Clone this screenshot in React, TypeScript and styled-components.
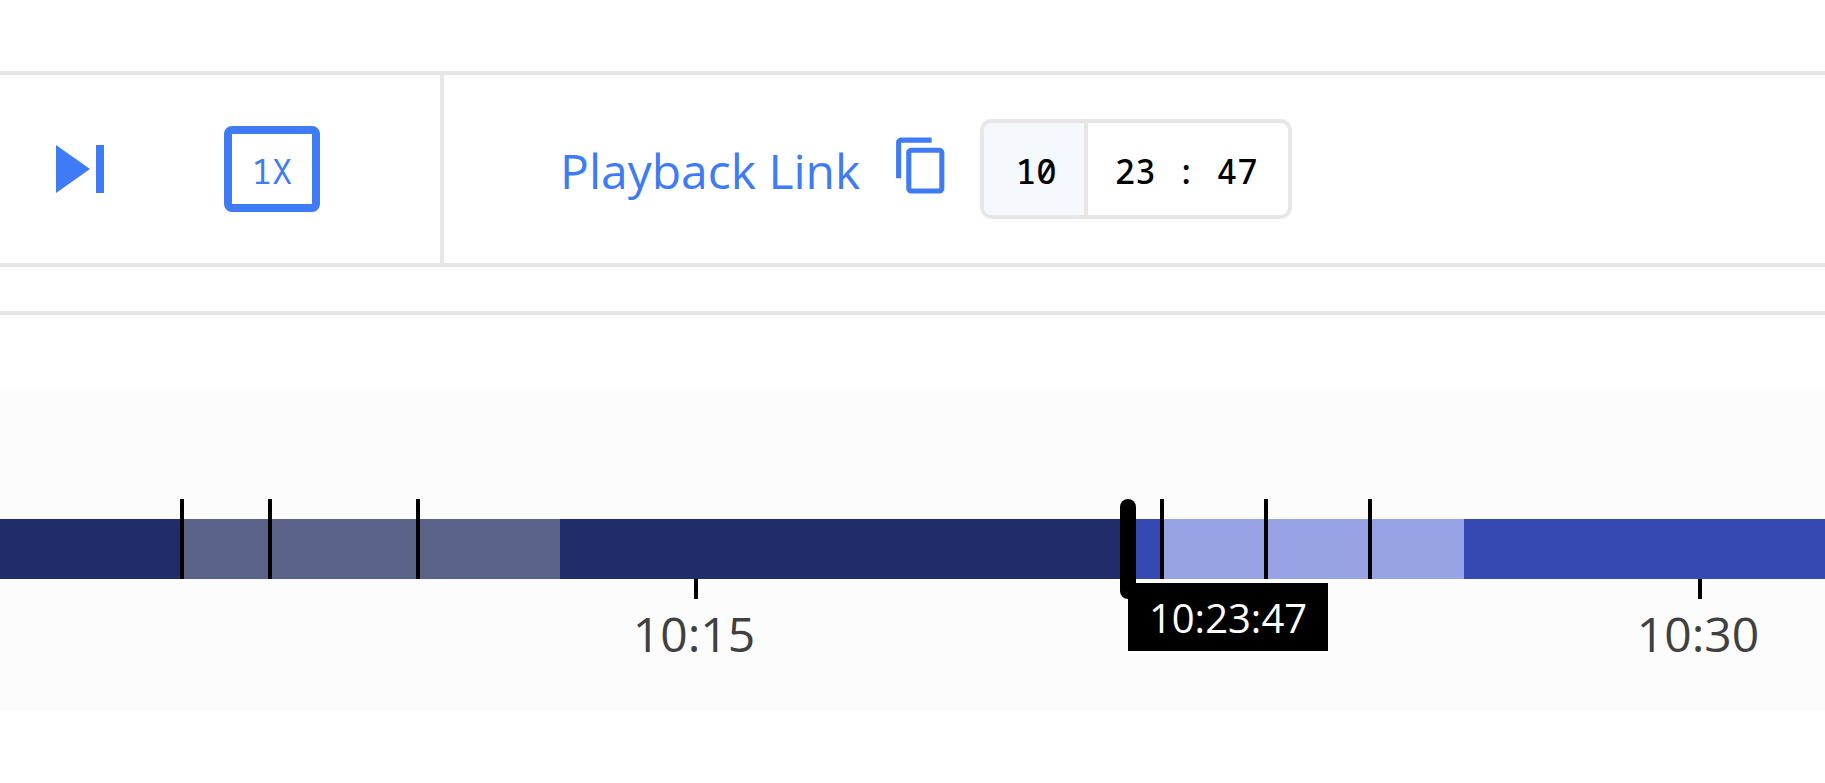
import React from "react";
import styled, { createGlobalStyle } from "styled-components";
import { MdContentCopy, MdSkipNext } from "react-icons/md";

const blue = "#3e7bf4";
const line = "#e6e6e6";
const sans = `"Open Sans", "Noto Sans", sans-serif`;
const mono = `"Noto Sans Mono", "DejaVu Sans Mono", monospace`;

const GlobalStyle = createGlobalStyle`
  *, *::before, *::after { box-sizing: border-box; }
  body { margin: 0; background: #fff; font-family: ${sans}; overflow-x: hidden; }
`;

const Page = styled.main`
  padding: 71px 0 72px;
`;

const Toolbar = styled.section`
  display: flex;
  height: 196px;
  border-top: 4px solid ${line};
  border-bottom: 4px solid ${line};
`;

const Controls = styled.div`
  display: flex;
  align-items: center;
  gap: 96px;
  padding: 0 120px 0 32px;
  border-right: 4px solid ${line};
`;

const IconButton = styled.button`
  display: flex;
  padding: 0;
  border: 0;
  background: none;
  color: ${blue};
`;

const SpeedButton = styled.button`
  width: 96px;
  height: 86px;
  padding: 4px 0 0;
  border: 8px solid ${blue};
  border-radius: 8px;
  background: #fff;
  color: ${blue};
  font: 34px/40px ${mono};
`;

const LinkGroup = styled.div`
  display: flex;
  align-items: center;
  padding-left: 116px;
`;

const PlaybackLink = styled.a`
  display: flex;
  align-items: center;
  gap: 31px;
  margin-right: 28px;
  color: ${blue};
  font-size: 48px;
  line-height: 68px;
  white-space: nowrap;
  text-decoration: none;

  span { padding-top: 4px; }
  svg { margin-bottom: 8px; }
`;

const TimeFields = styled.div`
  display: flex;
  width: 312px;
  height: 100px;
  border: 4px solid ${line};
  border-radius: 12px;
  overflow: hidden;
`;

const TimeInput = styled.input<{ $hour?: boolean }>`
  flex: ${(p) => (p.$hour ? "0 0 104px" : "1 1 0")};
  min-width: 0;
  padding: ${(p) => (p.$hour ? "4px 0 0 4px" : "4px 4px 0 0")};
  border: 0;
  border-right: ${(p) => (p.$hour ? `4px solid ${line}` : "0")};
  background: ${(p) => (p.$hour ? "#f5f9fd" : "#fff")};
  color: #000;
  font: 500 34px/40px ${mono};
  text-align: center;
`;

const TimelinePanel = styled.section`
  margin-top: 44px;
  padding-top: 76px;
  border-top: 4px solid ${line};
`;

const Timeline = styled.div`
  position: relative;
  height: 320px;
  padding-top: 128px;
  background: #fcfcfc;
  overflow: hidden;
`;

const Band = styled.div`
  display: flex;
  height: 60px;
`;

const tones = {
  played: "#212c6a",
  playedGap: "#5b6288",
  upcoming: "#3649b2",
  upcomingGap: "#98a3e6",
};

const Segment = styled.div<{ $tone: keyof typeof tones }>`
  flex: none;
  background: ${(p) => tones[p.$tone]};

  &:last-child { flex: 1; }
`;

const EventMark = styled.span`
  position: absolute;
  top: 108px;
  width: 4px;
  height: 80px;
  background: #000;
`;

const HourMark = styled.div`
  position: absolute;
  top: 188px;
  display: flex;
  flex-direction: column;
  align-items: center;
  width: 160px;
  margin-left: -80px;
  color: #404040;
  font-size: 48px;
  line-height: 70px;

  &::before {
    content: "";
    width: 4px;
    height: 20px;
    background: #000;
  }

  span { padding-right: 4px; }
`;

const Playhead = styled.div`
  position: absolute;
  top: 108px;
  width: 16px;
  height: 100px;
  margin-left: -8px;
  border-radius: 8px;
  background: #000;
`;

const PlayheadTime = styled.output`
  position: absolute;
  top: 192px;
  width: 200px;
  height: 68px;
  background: #000;
  color: #fff;
  font-size: 40px;
  line-height: 70px;
  text-align: center;
`;

const segments: { tone: keyof typeof tones; width: number }[] = [
  { tone: "played", width: 180 },
  { tone: "playedGap", width: 380 },
  { tone: "played", width: 568 },
  { tone: "upcoming", width: 32 },
  { tone: "upcomingGap", width: 304 },
  { tone: "upcoming", width: 361 },
];
const events = [180, 268, 416, 1160, 1264, 1368];
const hours = [
  { label: "10:15", at: 696 },
  { label: "10:30", at: 1700 },
];
const playheadAt = 1128;

export default function App() {
  return (
    <>
      <GlobalStyle />
      <Page>
        <Toolbar>
          <Controls>
            <IconButton type="button" aria-label="Skip to next">
              <MdSkipNext size={96} />
            </IconButton>
            <SpeedButton type="button" aria-label="Playback speed 1X">1X</SpeedButton>
          </Controls>
          <LinkGroup>
            <PlaybackLink href="#playback">
              <span>Playback Link</span>
              <MdContentCopy size={61} />
            </PlaybackLink>
            <TimeFields>
              <TimeInput $hour aria-label="Hour" defaultValue="10" />
              <TimeInput aria-label="Minutes and seconds" defaultValue="23 : 47" />
            </TimeFields>
          </LinkGroup>
        </Toolbar>
        <TimelinePanel>
          <Timeline>
            <Band>
              {segments.map((s, i) => (
                <Segment key={i} $tone={s.tone} style={{ width: s.width }} />
              ))}
            </Band>
            {events.map((x) => (
              <EventMark key={x} style={{ left: x }} />
            ))}
            {hours.map((h) => (
              <HourMark key={h.label} style={{ left: h.at }}>
                <span>{h.label}</span>
              </HourMark>
            ))}
            <Playhead style={{ left: playheadAt }} />
            <PlayheadTime style={{ left: playheadAt }}>10:23:47</PlayheadTime>
          </Timeline>
        </TimelinePanel>
      </Page>
    </>
  );
}
